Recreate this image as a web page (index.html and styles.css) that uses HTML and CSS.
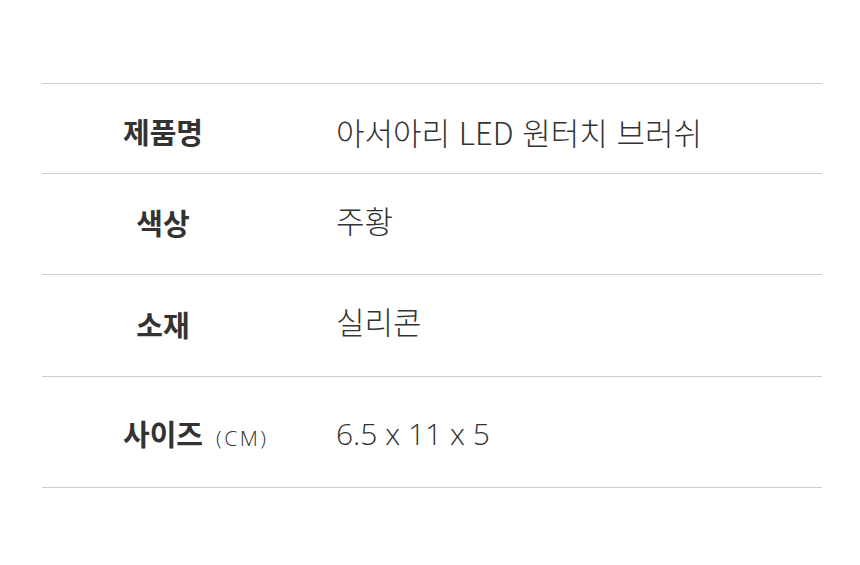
FILE: index.html
```html
<!DOCTYPE html>
<html lang="ko">
<head>
<meta charset="utf-8">
<link rel="stylesheet" href="styles.css">
</head>
<body>
<div class="spec">
  <div class="row r1">
    <div class="label"><span class="name">제품명</span></div>
    <div class="value">아서아리 LED 원터치 브러쉬</div>
  </div>
  <div class="row r2">
    <div class="label"><span class="name">색상</span></div>
    <div class="value">주황</div>
  </div>
  <div class="row r3">
    <div class="label"><span class="name">소재</span></div>
    <div class="value">실리콘</div>
  </div>
  <div class="row r4">
    <div class="label"><span class="name">사이즈</span><span class="unit">(CM)</span></div>
    <div class="value num">6.5 x 11 x 5</div>
  </div>
</div>
</body>
</html>
```
FILE: styles.css
```css
html, body {
  margin: 0;
  padding: 0;
  background: #fff;
}
body {
  width: 860px;
  height: 565px;
  overflow: hidden;
  font-family: "Noto Sans CJK KR", "Noto Sans", sans-serif;
  color: #2b2b2b;
}
.spec {
  margin: 83px 0 0 42px;
  width: 780px;
  border-top: 1px solid #cfcfcf;
}
.row {
  display: flex;
  align-items: center;
  border-bottom: 1px solid #cfcfcf;
  box-sizing: border-box;
}
.r1 { height: 90px; }
.r2 { height: 101px; }
.r3 { height: 102px; }
.r4 { height: 111px; }
.label {
  width: 294px;
  flex: none;
  display: flex;
  align-items: baseline;
  padding-left: 80px;
  box-sizing: border-box;
}
.r1 .label { padding-top: 4px; }
.r2 .label { padding-bottom: 4px; }
.r3 .label { padding-bottom: 3px; }
.r4 .label { padding-top: 2px; }
.name {
  display: inline-block;
  width: 82px;
  text-align: center;
  font-size: 29px;
  font-weight: 700;
  color: #333;
  white-space: nowrap;
}
.unit {
  margin-left: 12px;
  font-size: 21px;
  font-weight: 300;
  color: #333;
  letter-spacing: 2.5px;
  font-family: "Open Sans", "Noto Sans CJK KR", sans-serif;
}
.value {
  font-size: 31px;
  font-weight: 300;
  color: #333;
}
.r1 .value { padding-top: 5px; }
.r2 .value { padding-bottom: 10px; }
.r3 .value { padding-bottom: 11px; }
.r4 .value { padding-top: 3px; }
.num {
  font-family: "Open Sans", "Noto Sans CJK KR", sans-serif;
  font-size: 30px;
}
```
